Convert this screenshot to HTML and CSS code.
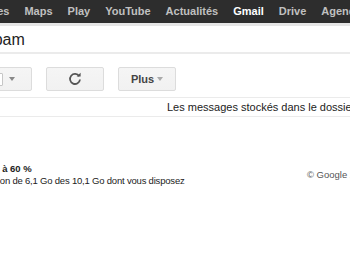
FILE: index.html
```html
<!DOCTYPE html>
<html lang="fr">
<head>
  <meta charset="UTF-8" />
  <title>Gmail - Spam</title>
  <link rel="stylesheet" href="styles.css">
</head>
<body>
  <div class="topbar">
    <div class="topbar-inner">
      <span class="nav-item">Images</span>
      <span class="nav-item">Maps</span>
      <span class="nav-item">Play</span>
      <span class="nav-item">YouTube</span>
      <span class="nav-item">Actualités</span>
      <span class="nav-item active">Gmail</span>
      <span class="nav-item">Drive</span>
      <span class="nav-item">Agenda</span>
    </div>
  </div>
  <div class="titlebar">
    <div class="title">Spam</div>
  </div>

  <div class="toolbar">
    <div class="btn btn-select">
      <span class="checkbox"></span>
      <span class="caret"></span>
    </div>
    <div class="btn btn-refresh">
      <svg width="14" height="14" viewBox="0 0 14 14">
        <path d="M11.2 4.2 A5 5 0 1 0 12 7.5" fill="none" stroke="#555" stroke-width="1.8"/>
        <path d="M8.6 4.6 L12.6 4.6 L12.6 0.8 Z" fill="#555"/>
      </svg>
    </div>
    <div class="btn btn-more">Plus <span class="caret"></span></div>
  </div>

  <div class="notice">
    <div class="notice-text">Les messages stockés dans le dossier Spam depuis plus de 30 jours seront automatiquement supprimés.</div>
  </div>

  <div class="footer">
    <div class="quota">
      <div class="quota-pct">Utilisé à 60 %</div>
      <div class="quota-text">Utilisation de 6,1 Go des 10,1 Go dont vous disposez</div>
    </div>
    <div class="copyright">© Google 2013</div>
  </div>
</body>
</html>
```

FILE: styles.css
```css
* { box-sizing: border-box; }
body {
  margin: 0;
  background: #fff;
  font-family: Arial, "Liberation Sans", sans-serif;
  color: #222;
  overflow: hidden;
}
.topbar {
  background: #2d2d2d;
  height: 23px;
  border-bottom: 3px solid #e5e5e5;
  box-sizing: content-box;
  overflow: hidden;
}
.topbar-inner {
  display: flex;
  margin-left: -36px;
  white-space: nowrap;
}
.nav-item {
  color: #c0c0c0;
  font-weight: bold;
  font-size: 11px;
  line-height: 22px;
  padding: 0 7.5px;
}
.nav-item.active { color: #fff; }
.titlebar {
  height: 26px;
  border-bottom: 2px solid #ebebeb;
  box-sizing: content-box;
}
.title {
  margin-left: -17px;
  font-size: 16px;
  line-height: 24px;
  padding-top: 2px;
  color: #222;
}
.toolbar {
  display: flex;
  gap: 14px;
  margin-left: -12px;
  padding-top: 13px;
  height: 30px;
  border-bottom: 1px solid #ebebeb;
  box-sizing: content-box;
}
.btn {
  height: 24px;
  width: 58px;
  border: 1px solid #dcdcdc;
  border-radius: 2px;
  background: linear-gradient(#f5f5f5, #f1f1f1);
  display: flex;
  align-items: center;
  justify-content: center;
  font-size: 11px;
  font-weight: bold;
  color: #444;
}
.btn-select {
  width: 54px;
  margin-left: -10px;
  justify-content: flex-start;
  padding-left: 11px;
  gap: 6px;
}
.checkbox {
  width: 13px;
  height: 13px;
  border: 1px solid #c6c6c6;
  background: #fff;
  border-radius: 1px;
}
.caret {
  display: inline-block;
  width: 0;
  height: 0;
  border-left: 3px solid transparent;
  border-right: 3px solid transparent;
  border-top: 4px solid #888;
  margin-left: 3px;
}
.btn-select .caret { margin-left: 0; }
.btn-more .caret { border-top-color: #aaa; }
.notice {
  height: 18px;
  border-bottom: 1px solid #ebebeb;
  box-sizing: content-box;
  white-space: nowrap;
  overflow: hidden;
}
.notice-text {
  padding-left: 167px;
  font-size: 11px;
  line-height: 18px;
  color: #222;
}
.footer {
  display: flex;
  justify-content: space-between;
  padding-top: 46px;
  white-space: nowrap;
  font-size: 9.5px;
  color: #222;
}
.quota { margin-left: -29px; }
.quota-pct { font-weight: bold; line-height: 12px; }
.quota-text { line-height: 12px; letter-spacing: -0.2px; }
.copyright {
  margin-right: -21px;
  padding-top: 6px;
  color: #555;
}
```
